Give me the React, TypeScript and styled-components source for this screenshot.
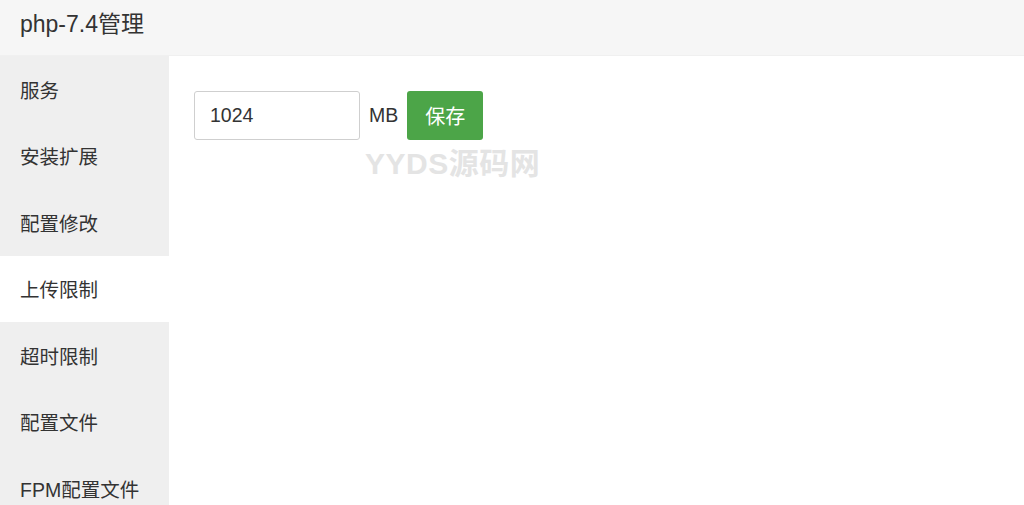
import React, { useState } from "react";
import styled, { createGlobalStyle } from "styled-components";

const Global = createGlobalStyle`
  html, body { margin: 0; padding: 0; background: #fff; }
  body { font-family: "Liberation Sans", Arial, "Noto Sans CJK SC", sans-serif; color: #333; }
`;

const Page = styled.div`
  width: 1024px;
  height: 505px;
  display: flex;
  flex-direction: column;
  overflow: hidden;
`;

const Header = styled.div`
  height: 56px;
  flex: none;
  background: #f6f6f6;
  border-bottom: 1px solid #f0f0f0;
  box-sizing: border-box;
  display: flex;
  align-items: center;
  padding: 0 20px 11px;
  font-size: 23px;
  color: #333;
`;

const Body = styled.div`
  flex: 1;
  display: flex;
  min-height: 0;
`;

const Sidebar = styled.div`
  width: 169px;
  flex: none;
  background: #efefef;
  display: flex;
  flex-direction: column;
`;

const NavItem = styled.div<{ $active?: boolean }>`
  height: 66.5px;
  flex: none;
  display: flex;
  align-items: center;
  padding-left: 20px;
  font-size: 19.5px;
  color: #333;
  background: ${(p) => (p.$active ? "#fff" : "transparent")};
`;

const Main = styled.div`
  flex: 1;
  padding: 35px 25px;
  position: relative;
`;

const Row = styled.div`
  display: flex;
  align-items: center;
`;

const Input = styled.input`
  width: 166px;
  height: 49px;
  box-sizing: border-box;
  border: 1px solid #cfcfcf;
  border-radius: 3px;
  padding: 0 15px;
  font-family: inherit;
  font-size: 19.5px;
  color: #333;
  outline: none;
`;

const Unit = styled.span`
  font-size: 19.5px;
  color: #333;
  margin: 0 9px;
`;

const SaveButton = styled.button`
  width: 76px;
  height: 49px;
  border: none;
  border-radius: 3px;
  background: #4ca548;
  color: #fff;
  font-family: inherit;
  font-size: 20px;
  cursor: pointer;
`;

const Watermark = styled.div`
  position: absolute;
  left: 196px;
  top: 83px;
  font-size: 30px;
  font-weight: bold;
  color: #e4e4e4;
  letter-spacing: 0.5px;
  pointer-events: none;
`;

const items = ["服务", "安装扩展", "配置修改", "上传限制", "超时限制", "配置文件", "FPM配置文件"];

export default function App() {
  const [val, setVal] = useState("1024");
  return (
    <Page>
      <Global />
      <Header>php-7.4管理</Header>
      <Body>
        <Sidebar>
          {items.map((t) => (
            <NavItem key={t} $active={t === "上传限制"}>
              {t}
            </NavItem>
          ))}
        </Sidebar>
        <Main>
          <Row>
            <Input value={val} onChange={(e) => setVal(e.target.value)} />
            <Unit>MB</Unit>
            <SaveButton>保存</SaveButton>
          </Row>
          <Watermark>YYDS源码网</Watermark>
        </Main>
      </Body>
    </Page>
  );
}
